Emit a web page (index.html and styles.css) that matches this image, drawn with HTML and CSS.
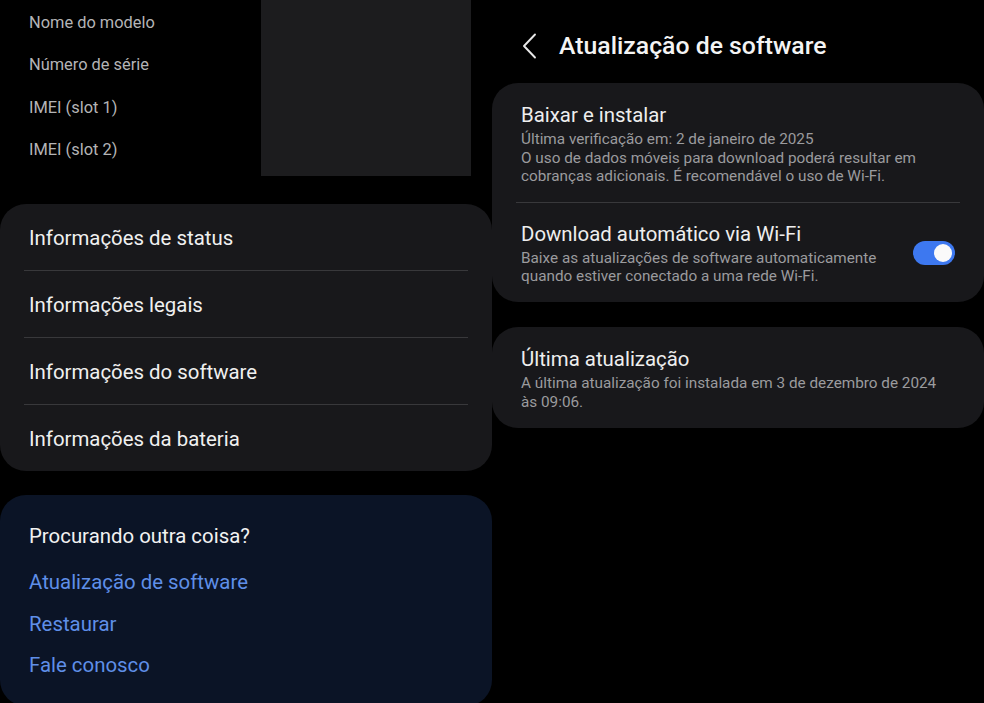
FILE: index.html
```html
<!DOCTYPE html>
<html lang="pt-BR">
<head>
<meta charset="utf-8">
<title>Atualização de software</title>
<link rel="stylesheet" href="styles.css">
</head>
<body>
<div class="page">
  <div class="col left">
    <div class="info">
      <div class="labels">
        <div class="label">Nome do modelo</div>
        <div class="label">Número de série</div>
        <div class="label">IMEI (slot 1)</div>
        <div class="label">IMEI (slot 2)</div>
      </div>
      <div class="masked"></div>
    </div>
    <div class="card menu">
      <div class="row">Informações de status</div>
      <div class="divider"></div>
      <div class="row">Informações legais</div>
      <div class="divider"></div>
      <div class="row">Informações do software</div>
      <div class="divider"></div>
      <div class="row">Informações da bateria</div>
    </div>
    <div class="card search">
      <div class="search-title">Procurando outra coisa?</div>
      <div class="links">
        <div class="link">Atualização de software</div>
        <div class="link">Restaurar</div>
        <div class="link">Fale conosco</div>
      </div>
    </div>
  </div>
  <div class="col right">
    <div class="header">
      <svg class="back" width="16" height="26" viewBox="0 0 16 26"><polyline points="13,1.5 2,13 13,24.5" fill="none" stroke="#e8e8e8" stroke-width="1.9" stroke-linecap="round" stroke-linejoin="round"/></svg>
      <div class="title">Atualização de software</div>
    </div>
    <div class="card settings">
      <div class="setting">
        <div class="texts">
          <div class="s-title">Baixar e instalar</div>
          <div class="s-sub">Última verificação em: 2 de janeiro de 2025<br>O uso de dados móveis para download poderá resultar em cobranças adicionais. É recomendável o uso de Wi-Fi.</div>
        </div>
      </div>
      <div class="divider"></div>
      <div class="setting">
        <div class="texts">
          <div class="s-title">Download automático via Wi-Fi</div>
          <div class="s-sub">Baixe as atualizações de software automaticamente quando estiver conectado a uma rede Wi-Fi.</div>
        </div>
        <div class="toggle"><div class="knob"></div></div>
      </div>
    </div>
    <div class="card settings last">
      <div class="setting">
        <div class="texts">
          <div class="s-title">Última atualização</div>
          <div class="s-sub">A última atualização foi instalada em 3 de dezembro de 2024 às 09:06.</div>
        </div>
      </div>
    </div>
  </div>
</div>
</body>
</html>
```
FILE: styles.css
```css
html, body {
  margin: 0;
  padding: 0;
  background: #000;
  height: 100%;
  overflow: hidden;
}
body {
  font-family: Roboto, "Noto Sans", "Liberation Sans", sans-serif;
  color: #eeeeee;
}
.page {
  display: flex;
  width: 984px;
  height: 703px;
  overflow: hidden;
}
.col {
  width: 492px;
  flex: none;
  display: flex;
  flex-direction: column;
}
.info {
  display: flex;
  height: 176px;
}
.labels {
  width: 261px;
  padding: 2px 0 0 29px;
  box-sizing: border-box;
}
.label {
  font-size: 16.4px;
  line-height: 42.4px;
  color: #b4b4b6;
}
.masked {
  width: 210px;
  height: 176px;
  background: #1c1c1e;
}
.card {
  background: #18181b;
  border-radius: 26px;
}
.menu {
  margin-top: 28px;
}
.row {
  height: 66px;
  display: flex;
  align-items: center;
  padding: 1px 29px 0;
  box-sizing: border-box;
  font-size: 20.4px;
  color: #f0f0f0;
}
.divider {
  height: 1px;
  margin: 0 24px;
  background: #38383b;
}
.search {
  margin-top: 24px;
  background: #0b1426;
  padding: 27px 29px 0;
  flex: none;
  height: 211px;
  box-sizing: border-box;
}
.search-title {
  font-size: 20.4px;
  line-height: 28px;
  color: #f2f2f2;
}
.links {
  margin-top: 12px;
}
.link {
  font-size: 20.4px;
  line-height: 41.5px;
  color: #5f8fe8;
}
.header {
  height: 83px;
  display: flex;
  align-items: center;
  padding-left: 30px;
  box-sizing: border-box;
}
.back {
  flex: none;
  margin-top: 8px;
}
.title {
  margin-left: 21px;
  margin-top: 8px;
  font-size: 24.8px;
  font-weight: 500;
  color: #f4f4f4;
}
.setting {
  display: flex;
  align-items: center;
  padding: 18px 29px 16px;
}
.settings .setting:first-child {
  padding-top: 19px;
}
.texts {
  flex: 1;
}
.s-title {
  font-size: 20.4px;
  line-height: 26px;
  color: #eeeeee;
}
.s-sub {
  margin-top: 2px;
  font-size: 15.3px;
  line-height: 18.5px;
  color: #9b9b9e;
  padding-right: 4px;
}
.last .s-sub {
  line-height: 19px;
}
.last .setting {
  padding-top: 18px;
}
.toggle {
  flex: none;
  width: 42px;
  height: 24px;
  border-radius: 12px;
  background: #3d78f0;
  display: flex;
  align-items: center;
  justify-content: flex-end;
  padding: 0 3px;
  box-sizing: border-box;
  margin-left: 12px;
}
.knob {
  width: 18px;
  height: 18px;
  border-radius: 50%;
  background: #fafafa;
}
.last {
  margin-top: 25px;
}
```
